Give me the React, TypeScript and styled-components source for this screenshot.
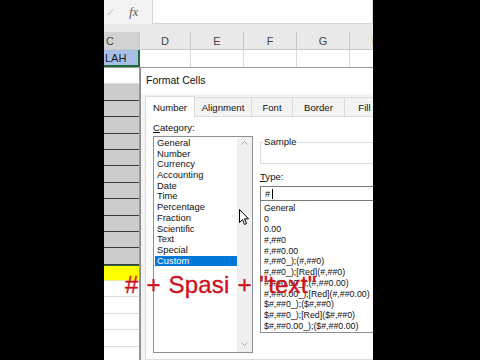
import React from 'react'
import styled, { createGlobalStyle } from 'styled-components'

const GlobalStyle = createGlobalStyle`
  html, body {
    margin: 0;
    padding: 0;
    background: #000;
  }
  body {
    width: 480px;
    height: 360px;
    overflow: hidden;
    font-family: 'Liberation Sans', Arial, sans-serif;
  }
`

const Page = styled.div`
  width: 480px;
  height: 360px;
  background: #000;
  display: flex;
`

const Screen = styled.div`
  margin-left: 104px;
  width: 269px;
  height: 360px;
  background: #fff;
  position: relative;
  overflow: hidden;
  display: flex;
  flex-direction: column;
`

const TopArea = styled.div`
  flex: none;
  background: #e9e9e9;
  padding-bottom: 8px;
`

const FormulaBar = styled.div`
  height: 24px;
  display: flex;
  background: #f3f3f3;
`

const FxBox = styled.div`
  width: 48px;
  display: flex;
  align-items: center;
  justify-content: space-between;
  padding: 0 14px 0 2px;
  box-sizing: border-box;
  color: #c8c8c8;
  font-size: 11px;
`

const Fx = styled.span`
  font-family: 'Liberation Serif', serif;
  font-style: italic;
  color: #555;
  font-size: 12px;
`

const FormulaInput = styled.div`
  flex: 1;
  background: #fff;
  border: 1px solid #d6d6d6;
  border-top: none;
`

const HeaderRow = styled.div`
  display: flex;
  height: 17px;
  background: #e9e9e9;
  border-bottom: 1px solid #c8c8c8;
`

const HeaderCell = styled.div<{ $w: number; $active?: boolean }>`
  flex: none;
  width: ${({ $w }) => $w}px;
  box-sizing: border-box;
  display: flex;
  align-items: center;
  justify-content: ${({ $active }) => ($active ? 'flex-start' : 'center')};
  padding-left: ${({ $active }) => ($active ? '2px' : '0')};
  border-right: 1px solid #c8c8c8;
  background: ${({ $active }) => ($active ? '#d2d2d2' : '#e9e9e9')};
  color: #444;
  font-size: 11px;
`

const SheetRow = styled.div`
  display: flex;
  height: 17px;
  border-bottom: 1px solid #9a9a9a;
`

const SheetCell = styled.div<{ $w: number; $selected?: boolean }>`
  flex: none;
  width: ${({ $w }) => $w}px;
  box-sizing: border-box;
  display: flex;
  align-items: center;
  border-right: 1px solid #dadada;
  background: ${({ $selected }) => ($selected ? '#a7bfe6' : '#fff')};
  ${({ $selected }) => ($selected ? 'border-right: 2px solid #1e6b3c; border-bottom: 2px solid #1e6b3c;' : '')}
  color: #1a1a1a;
  font-size: 11px;
  padding-left: 1px;
`

const Lower = styled.div`
  flex: 1;
  display: flex;
  min-height: 0;
`

const CellColumn = styled.div`
  flex: none;
  width: 35px;
  border-right: 1px solid #9a9a9a;
  display: flex;
  flex-direction: column;
`

const ColCell = styled.div<{ $kind: 'white' | 'gray' | 'yellow' | 'blank' }>`
  flex: none;
  height: 16.4px;
  box-sizing: border-box;
  background: ${({ $kind }) =>
    $kind === 'gray' ? '#cbcbcb' : $kind === 'yellow' ? '#ffff00' : '#fff'};
  border-bottom: ${({ $kind }) =>
    $kind === 'gray' ? '1.5px solid #3a3a3a' : $kind === 'yellow' ? '1px solid #e8e8a0' : '1px solid #dcdcdc'};
  border-top: ${({ $kind }) => ($kind === 'yellow' ? '1px solid #1e6b3c' : 'none')};
`

const Dialog = styled.div`
  flex: none;
  width: 270px;
  background: #f0f0f0;
  border-left: 1px solid #8a8a8a;
  display: flex;
  flex-direction: column;
`

const TitleBar = styled.div`
  height: 26px;
  flex: none;
  background: #fff;
  display: flex;
  align-items: center;
  padding: 0 0 2px 5px;
  box-sizing: border-box;
  font-size: 10.5px;
  color: #111;
`

const DialogBody = styled.div`
  flex: 1;
  display: flex;
  flex-direction: column;
  padding: 1px 0 0 4px;
  background: #f4f4f4;
`

const TabStrip = styled.div`
  height: 21px;
  flex: none;
  display: flex;
  align-items: flex-end;
`

const Tab = styled.div<{ $w: number; $active?: boolean }>`
  flex: none;
  width: ${({ $w }) => $w}px;
  height: ${({ $active }) => ($active ? 21 : 19)}px;
  box-sizing: border-box;
  display: flex;
  align-items: center;
  justify-content: center;
  border: 1px solid #dcdcdc;
  border-bottom: none;
  border-left: ${({ $active }) => ($active ? '1px solid #dcdcdc' : 'none')};
  background: ${({ $active }) => ($active ? '#fff' : '#f3f3f3')};
  font-size: 9.6px;
  color: #111;
  margin-bottom: ${({ $active }) => ($active ? '-1px' : '0')};
  position: relative;
`

const Panel = styled.div`
  flex: 1;
  background: #fff;
  border: 1px solid #dcdcdc;
  display: grid;
  grid-template-columns: 100px 140px;
  column-gap: 7px;
  padding: 5px 0 0 7px;
  align-content: start;
`

const Pane = styled.div`
  display: flex;
  flex-direction: column;
`

const Label = styled.div`
  height: 12px;
  line-height: 12px;
  font-size: 9.6px;
  color: #111;
`

const Key = styled.span`
  text-decoration: underline;
  text-underline-offset: 1px;
`

const ListBox = styled.div<{ $h: number }>`
  height: ${({ $h }) => $h}px;
  box-sizing: border-box;
  border: 1px solid #8c8f96;
  background: #fff;
  display: flex;
  margin-top: 2px;
`

const Items = styled.div<{ $pt: number }>`
  flex: 1;
  padding: ${({ $pt }) => $pt}px 0 0 1px;
  min-width: 0;
`

const Item = styled.div<{ $selected?: boolean; $small?: boolean }>`
  height: 10.7px;
  line-height: 10.7px;
  font-size: ${({ $small }) => ($small ? 8.8 : 9.4)}px;
  padding-left: 2px;
  white-space: nowrap;
  background: ${({ $selected }) => ($selected ? '#0078d7' : 'transparent')};
  color: ${({ $selected }) => ($selected ? '#fff' : '#111')};
`

const ScrollBar = styled.div`
  flex: none;
  width: 15px;
  background: #f0f0f0;
  display: flex;
  flex-direction: column;
  justify-content: space-between;
  align-items: center;
  padding: 4px 0 6px;
`

const SampleBox = styled.fieldset`
  margin: 15px 0 0;
  padding: 0;
  height: 27px;
  box-sizing: border-box;
  border: 1px solid #dcdcdc;
  border-right: none;
`

const SampleLegend = styled.legend`
  padding: 0 1px;
  margin-left: 2px;
  font-size: 9.6px;
  line-height: 10px;
  color: #111;
`

const TypeLabel = styled(Label)`
  margin-top: 7px;
`

const TypeInput = styled.div`
  margin-top: 3px;
  height: 15px;
  box-sizing: border-box;
  border: 1px solid #7a7a7a;
  display: flex;
  align-items: center;
  padding-left: 4px;
  gap: 2px;
  font-size: 9.4px;
  color: #111;
`

const Caret = styled.span`
  width: 1px;
  height: 10px;
  background: #000;
`

const TypeList = styled(ListBox)`
  margin-top: 0;
  border-top: none;
`

const Overlay = styled.div`
  position: absolute;
  left: 21px;
  top: 273px;
  font-size: 24px;
  line-height: 24px;
  color: #cf1020;
  -webkit-text-stroke: 0.35px #cf1020;
  white-space: nowrap;
  word-spacing: 1px;
  letter-spacing: 0.2px;
`

const Cursor = styled.svg`
  position: absolute;
  left: 135px;
  top: 209px;
`

const categories = [
  'General', 'Number', 'Currency', 'Accounting', 'Date', 'Time', 'Percentage',
  'Fraction', 'Scientific', 'Text', 'Special', 'Custom',
]

const types = [
  'General', '0', '0.00', '#,##0', '#,##0.00', '#,##0_);(#,##0)', '#,##0_);[Red](#,##0)',
  '#,##0.00_);(#,##0.00)', '#,##0.00_);[Red](#,##0.00)', '$#,##0_);($#,##0)',
  '$#,##0_);[Red]($#,##0)', '$#,##0.00_);($#,##0.00)',
]

const columnCells: Array<'white' | 'gray' | 'yellow' | 'blank'> = [
  'white', 'gray', 'gray', 'gray', 'gray', 'gray', 'gray', 'gray', 'gray', 'gray', 'gray', 'gray',
  'yellow', 'blank', 'blank', 'blank', 'blank', 'blank', 'blank',
]

const columns = [
  { name: 'C', w: 36 },
  { name: 'D', w: 51 },
  { name: 'E', w: 53 },
  { name: 'F', w: 53 },
  { name: 'G', w: 53 },
  { name: 'H', w: 53 },
]

const tabs = [
  { name: 'Number', w: 50 },
  { name: 'Alignment', w: 57 },
  { name: 'Font', w: 41 },
  { name: 'Border', w: 52 },
  { name: 'Fill', w: 40 },
]

const Chevron = ({ up }: { up?: boolean }) => (
  <svg width="7" height="4" viewBox="0 0 7 4">
    <path d={up ? 'M0.5 3.5 L3.5 0.5 L6.5 3.5' : 'M0.5 0.5 L3.5 3.5 L6.5 0.5'} fill="none" stroke="#a8a8a8" strokeWidth="1" />
  </svg>
)

const App = () => {
  return (
    <Page>
      <GlobalStyle />
      <Screen>
        <TopArea>
          <FormulaBar>
            <FxBox>
              <span>✓</span>
              <Fx>fx</Fx>
            </FxBox>
            <FormulaInput />
          </FormulaBar>
        </TopArea>
        <HeaderRow>
          {columns.map((c, i) => (
            <HeaderCell key={c.name} $w={c.w} $active={i === 0}>{c.name}</HeaderCell>
          ))}
        </HeaderRow>
        <SheetRow>
          {columns.map((c, i) => (
            <SheetCell key={c.name} $w={c.w} $selected={i === 0}>{i === 0 ? 'LAH' : ''}</SheetCell>
          ))}
        </SheetRow>
        <Lower>
          <CellColumn>
            {columnCells.map((k, i) => (
              <ColCell key={i} $kind={k} />
            ))}
          </CellColumn>
          <Dialog>
            <TitleBar>Format Cells</TitleBar>
            <DialogBody>
              <TabStrip>
                {tabs.map((t, i) => (
                  <Tab key={t.name} $w={t.w} $active={i === 0}>{t.name}</Tab>
                ))}
              </TabStrip>
              <Panel>
                <Pane>
                  <Label><Key>C</Key>ategory:</Label>
                  <ListBox $h={217}>
                    <Items $pt={1}>
                      {categories.map((c) => (
                        <Item key={c} $selected={c === 'Custom'}>{c}</Item>
                      ))}
                    </Items>
                    <ScrollBar>
                      <Chevron up />
                      <Chevron />
                    </ScrollBar>
                  </ListBox>
                </Pane>
                <Pane>
                  <SampleBox>
                    <SampleLegend>Sample</SampleLegend>
                  </SampleBox>
                  <TypeLabel><Key>T</Key>ype:</TypeLabel>
                  <TypeInput>
                    #<Caret />
                  </TypeInput>
                  <TypeList $h={132}>
                    <Items $pt={2}>
                      {types.map((t) => (
                        <Item key={t} $small>{t}</Item>
                      ))}
                    </Items>
                  </TypeList>
                </Pane>
              </Panel>
            </DialogBody>
          </Dialog>
        </Lower>
        <Overlay># + Spasi + "text"</Overlay>
        <Cursor width="10" height="17" viewBox="0 0 10 17">
          <path d="M0.5 0.5 L0.5 13.5 L3.5 10.5 L5.5 15.5 L7.5 14.5 L5.5 9.8 L9.5 9.8 Z" fill="#fff" stroke="#000" strokeWidth="1" strokeLinejoin="round" />
        </Cursor>
      </Screen>
    </Page>
  )
}

export default App
